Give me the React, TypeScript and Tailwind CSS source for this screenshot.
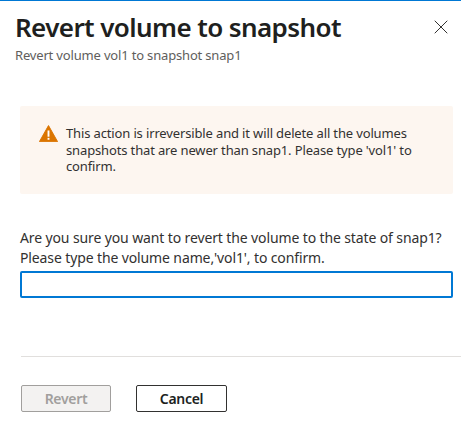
import { X } from "lucide-react";

const font = { fontFamily: '"Noto Sans", "Open Sans", sans-serif' };

export default function App() {
  return (
    <div style={font} className="w-[461px] h-[437px] overflow-hidden bg-white border-t border-[#0078d4] text-[#323130]">
      {/* Header */}
      <div className="flex justify-between pl-[15px] pr-[8px] pt-[10px]">
        <div>
          <h1 className="text-[26px] leading-[32px] font-semibold text-[#201f1e] tracking-[-0.6px]">Revert volume to snapshot</h1>
          <p className="mt-[4px] text-[13px] leading-[16px] text-[#605e5c] tracking-[-0.17px]">Revert volume vol1 to snapshot snap1</p>
        </div>
        <button className="h-[24px] mt-[4px] text-[#323130]"><X className="w-6 h-6" strokeWidth={1} /></button>
      </div>

      {/* Warning */}
      <div className="mt-[43px] ml-[20px] w-[433px] h-[88px] bg-[#fdf6f0] rounded-[2px] flex pl-[19px] pt-[19px]">
        <svg viewBox="0 0 20 18" className="w-[19px] h-[17px] shrink-0">
          <path d="M10 0.6 L19.6 17.6 L0.4 17.6 Z" fill="#db7500" stroke="#db7500" strokeLinejoin="round" />
          <rect x="9" y="5.8" width="2" height="6.6" fill="#fff" />
          <rect x="9" y="13.6" width="2" height="2" fill="#fff" />
        </svg>
        <p className="ml-[8px] w-[350px] text-[13px] leading-[16.5px] tracking-[-0.14px] text-[#323130]">
          This action is irreversible and it will delete all the volumes snapshots that are newer than snap1. Please type 'vol1' to confirm.
        </p>
      </div>

      {/* Confirm */}
      <div className="mt-[34px] px-[20px]">
        <p className="text-[14px] leading-[20px] tracking-[-0.12px] w-[440px] text-[#323130]">
          Are you sure you want to revert the volume to the state of snap1?<br />
          Please type the volume name,'vol1', to confirm.
        </p>
        <input className="block mt-[3px] w-[433px] h-[27px] border-2 border-[#0078d4] rounded-[2px] outline-none" />
      </div>

      {/* Footer */}
      <div className="mt-[58px] ml-[21px] border-t border-[#e1dfdd]" />
      <div className="mt-[28px] ml-[21px] flex gap-[25px]">
        <button disabled className="w-[90px] h-[27px] bg-[#f3f2f1] border border-[#a19f9d] rounded-[2px] text-[14px] font-semibold text-[#a19f9d] tracking-[-0.3px]">Revert</button>
        <button className="w-[91px] h-[27px] bg-white border border-[#323130] rounded-[2px] text-[14px] font-semibold text-[#201f1e] tracking-[-0.3px]">Cancel</button>
      </div>
    </div>
  );
}
